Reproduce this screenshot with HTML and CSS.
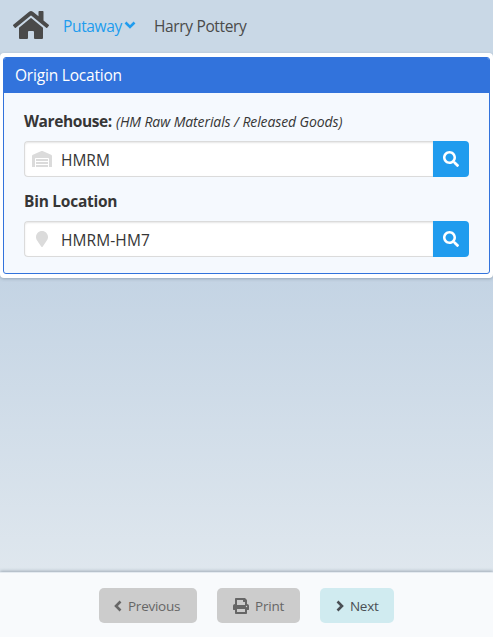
FILE: index.html
```html
<!DOCTYPE html>
<html lang="en">
<head>
<meta charset="utf-8">
<title>Putaway</title>
<link rel="stylesheet" href="styles.css">
</head>
<body>
<header class="navbar">
  <svg class="home" viewBox="0 0 576 512"><path d="M280.37 148.26L96 300.11V464a16 16 0 0 0 16 16l112.06-.29a16 16 0 0 0 15.92-16V368a16 16 0 0 1 16-16h64a16 16 0 0 1 16 16v95.64a16 16 0 0 0 16 16.05L464 480a16 16 0 0 0 16-16V300L295.67 148.26a12.19 12.19 0 0 0-15.3 0zM571.6 251.47L488 182.56V44.05a12 12 0 0 0-12-12h-56a12 12 0 0 0-12 12v72.61L318.47 43a48 48 0 0 0-61 0L4.34 251.47a12 12 0 0 0-1.6 16.9l25.5 31A12 12 0 0 0 45.15 301l235.22-193.74a12.19 12.19 0 0 1 15.3 0L530.9 301a12 12 0 0 0 16.9-1.6l25.5-31a12 12 0 0 0-1.7-16.93z"/></svg>
  <a class="menu"><span class="menu-text">Putaway</span><svg class="caret" viewBox="0 0 12 8"><path d="M1.500 1.500L6 6l4.500-4.500"/></svg></a>
  <span class="user">Harry Pottery</span>
</header>
<main>
  <section class="card">
    <div class="panel">
      <h1 class="panel-title"><span class="title-text">Origin Location</span></h1>
      <div class="panel-body">
        <label class="label"><span class="warehouse-label">Warehouse:</span> <em>(HM Raw Materials / Released Goods)</em></label>
        <div class="field">
          <div class="input">
            <span class="icon"><svg class="warehouse" viewBox="0 0 640 512"><path d="M504 352H136.4c-4.4 0-8 3.6-8 8l-.1 48c0 4.4 3.6 8 8 8H504c4.4 0 8-3.6 8-8v-48c0-4.4-3.6-8-8-8zm0 96H136.1c-4.4 0-8 3.6-8 8l-.1 48c0 4.4 3.6 8 8 8h368c4.4 0 8-3.6 8-8v-48c0-4.4-3.6-8-8-8zm0-192H136.6c-4.4 0-8 3.6-8 8l-.1 48c0 4.4 3.6 8 8 8H504c4.4 0 8-3.6 8-8v-48c0-4.4-3.6-8-8-8zm106.5-139L338.4 3.7a48.15 48.15 0 0 0-36.9 0L29.5 117C11.7 124.5 0 141.900 0 161.300V504c0 4.400 3.600 8 8 8h80c4.400 0 8-3.600 8-8V256c0-17.600 14.600-32 32.600-32h382.800c18 0 32.600 14.400 32.600 32v248c0 4.400 3.600 8 8 8h80c4.400 0 8-3.600 8-8V161.300c0-19.400-11.700-36.800-29.500-44.300z"/></svg></span>
            <span class="value value-warehouse">HMRM</span>
          </div>
          <button class="search" aria-label="Search"><svg viewBox="0 0 512 512"><path d="M505 442.700L405.300 343c-4.500-4.500-10.600-7-17-7H372c27.600-35.300 44-79.700 44-128C416 93.100 322.900 0 208 0S0 93.100 0 208s93.100 208 208 208c48.300 0 92.700-16.400 128-44v16.300c0 6.400 2.500 12.500 7 17l99.700 99.700c9.400 9.400 24.600 9.400 33.900 0l28.300-28.300c9.400-9.400 9.400-24.600.1-34zM208 336c-70.700 0-128-57.200-128-128 0-70.700 57.200-128 128-128 70.700 0 128 57.200 128 128 0 70.700-57.200 128-128 128z"/></svg></button>
        </div>
        <label class="label"><span class="bin-label">Bin Location</span></label>
        <div class="field">
          <div class="input">
            <span class="icon"><svg class="marker" viewBox="0 0 384 512"><path d="M172.268 501.670C26.970 291.031 0 269.413 0 192 0 85.961 85.961 0 192 0s192 85.961 192 192c0 77.413-26.970 99.031-172.268 309.670-9.535 13.774-29.930 13.773-39.464 0z"/></svg></span>
            <span class="value value-bin">HMRM-HM7</span>
          </div>
          <button class="search" aria-label="Search"><svg viewBox="0 0 512 512"><path d="M505 442.700L405.300 343c-4.500-4.500-10.600-7-17-7H372c27.600-35.300 44-79.700 44-128C416 93.100 322.900 0 208 0S0 93.100 0 208s93.100 208 208 208c48.300 0 92.700-16.400 128-44v16.300c0 6.400 2.500 12.500 7 17l99.700 99.700c9.400 9.400 24.600 9.400 33.900 0l28.300-28.300c9.400-9.400 9.400-24.600.1-34zM208 336c-70.700 0-128-57.200-128-128 0-70.700 57.200-128 128-128 70.700 0 128 57.200 128 128 0 70.700-57.200 128-128 128z"/></svg></button>
        </div>
      </div>
    </div>
  </section>
</main>
<footer class="actions">
  <button class="btn previous" disabled><svg class="chevron" viewBox="0 0 8 12"><path d="M6.500 1.500L2 6l4.500 4.500"/></svg><span>Previous</span></button>
  <button class="btn print" disabled><svg class="printer" viewBox="0 0 512 512"><path d="M448 192V77.250c0-8.490-3.370-16.620-9.370-22.630L393.370 9.370c-6-6-14.140-9.370-22.630-9.370H96C78.330 0 64 14.330 64 32v160c-35.350 0-64 28.650-64 64v112c0 8.840 7.160 16 16 16h48v96c0 17.670 14.330 32 32 32h320c17.670 0 32-14.330 32-32v-96h48c8.840 0 16-7.160 16-16V256c0-35.350-28.650-64-64-64zm-64 256H128v-96h256v96zm0-224H128V64h192v48c0 8.840 7.160 16 16 16h48v96zm48 72c-13.250 0-24-10.750-24-24 0-13.260 10.750-24 24-24s24 10.740 24 24c0 13.250-10.750 24-24 24z"/></svg><span>Print</span></button>
  <button class="btn next"><svg class="chevron" viewBox="0 0 8 12"><path d="M1.500 1.500L6 6l-4.500 4.500"/></svg><span>Next</span></button>
</footer>
</body>
</html>
```
FILE: styles.css
```css
* { box-sizing: border-box; }
body {
  margin: 0;
  height: 637px;
  display: flex;
  flex-direction: column;
  overflow: hidden;
  font-family: "Open Sans", "Noto Sans", sans-serif;
  font-size: 15.5px;
  color: #363636;
  background: linear-gradient(#c4d4e4 280px, #dfe7ee 571px);
}
svg { display: block; fill: currentColor; flex: none; }
button { font: inherit; border: 0; padding: 0; }
.navbar {
  height: 53px;
  flex: none;
  display: flex;
  align-items: center;
  padding: 0 0 2px 13px;
  color: #4a4a4a;
  background: #c9d8e6;
}
.home { width: 36px; height: 32px; margin-top: -1px; }
.menu { display: flex; align-items: center; margin-left: 14px; width: 91px; color: #209cee; }
.menu-text { letter-spacing: -.35px; width: 61px; }
.caret { width: 12px; height: 8px; margin-top: -2px; }
.caret path, .chevron path { fill: none; stroke: currentColor; stroke-width: 2.600; }
.user { letter-spacing: -.35px; }
main { flex: 1; }
.card {
  height: 225px;
  padding: 4px 3px;
  background: #fff;
  border-radius: 4px;
  box-shadow: 0 1px 3px #6e7e9080;
}
.panel { height: 217px; border: 1px solid #3273dc; border-radius: 3px; background: #f5f9fe; overflow: hidden; }
.panel-title {
  height: 35px;
  margin: 0;
  padding-left: 11px;
  font-size: 15.5px;
  font-weight: 400;
  line-height: 35px;
  color: #fff;
  background: #3273dc;
}
.title-text { letter-spacing: -.2px; }
.panel-body { padding: 16px 20px; }
.label { display: flex; align-items: center; height: 24px; margin-bottom: 8px; font-weight: 700; white-space: nowrap; }
.warehouse-label { width: 92px; letter-spacing: -.4px; }
.bin-label { letter-spacing: -.25px; }
em { font-size: 14px; font-weight: 400; letter-spacing: -.1px; }
.field { display: flex; height: 36px; margin-bottom: 12px; }
.input {
  display: flex;
  flex: 1;
  align-items: center;
  border: 1px solid #dbdbdb;
  border-right: 0;
  border-radius: 4px 0 0 4px;
  background: #fff;
  box-shadow: inset 0 1px 2px #0a0a0a1a;
}
.icon { display: flex; justify-content: center; width: 36px; padding-right: 2px; color: #dbdbdb; }
.warehouse { width: 20px; height: 16px; }
.marker { width: 12px; height: 16px; }
.value { padding-top: 2px; }
.value-warehouse { letter-spacing: 0; }
.value-bin { letter-spacing: .1px; }
.search { display: flex; align-items: center; justify-content: center; width: 36px; border-radius: 0 4px 4px 0; color: #fff; background: #209cee; }
.search svg { width: 16px; height: 16px; }
.actions {
  z-index: 1;
  display: flex;
  flex: none;
  gap: 20px;
  height: 65px;
  padding: 16px 0 0 99px;
  background: #f8fafc;
  box-shadow: 0 -1px 3px #60708080, inset 0 1px #e4eaf0;
}
.btn { display: flex; align-items: center; height: 35px; border-radius: 5px; padding-left: 16px; font-size: 13.5px; color: #666; background: #ccc; }
.previous { width: 98px; padding-left: 15px; letter-spacing: -.25px; }
.print { width: 83px; letter-spacing: -.2px; }
.next { width: 74px; letter-spacing: -.3px; color: #4a4f54; background: #d0ebf0; }
.chevron { width: 8px; height: 12px; margin-right: 6px; }
.printer { width: 16px; height: 16px; margin-right: 6px; }
```
